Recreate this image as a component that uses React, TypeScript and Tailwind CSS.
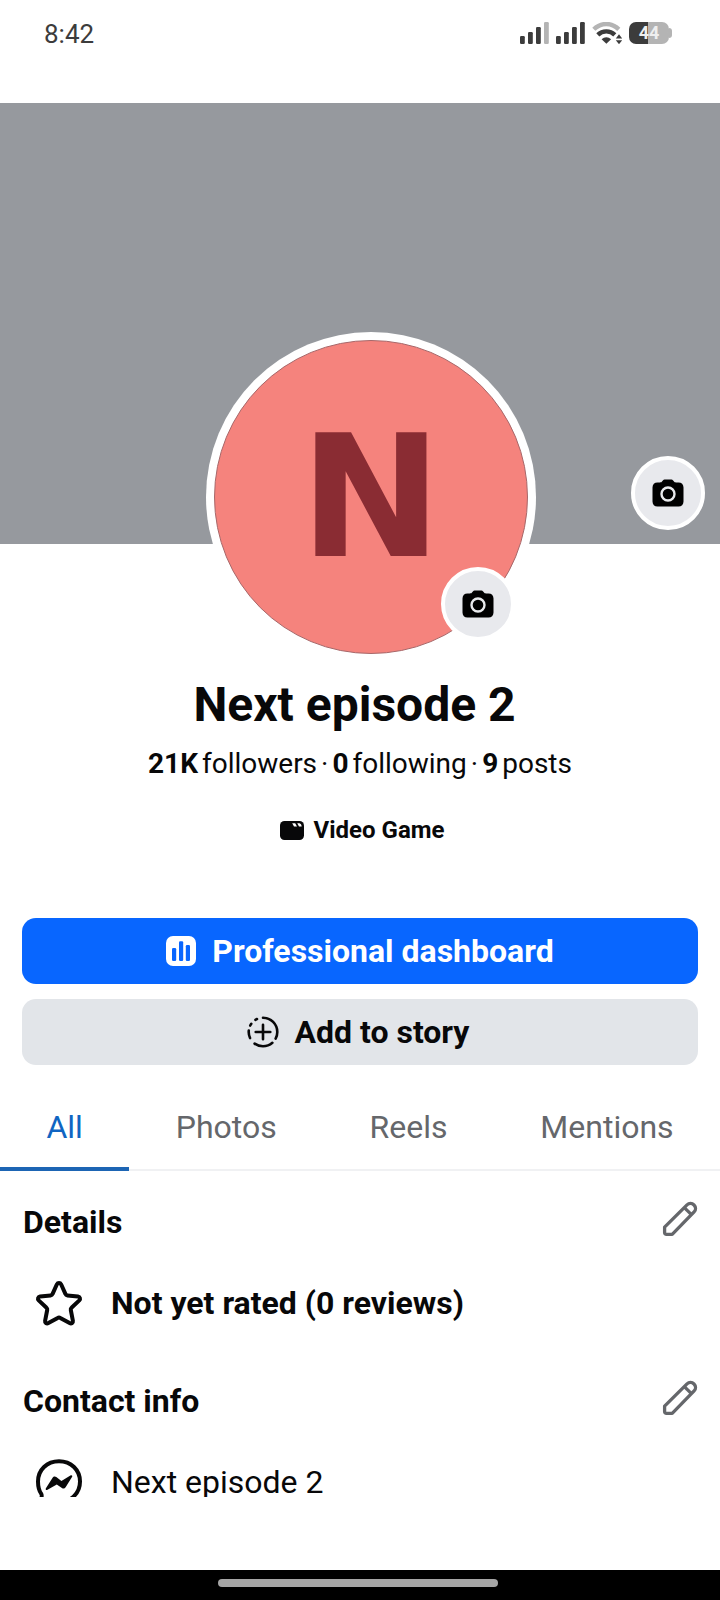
import React from "react";

function SignalIcon({ weak = false }: { weak?: boolean }) {
  return (
    <svg width="29" height="22" viewBox="0 0 29 22" fill="#3c3c3c" aria-hidden="true">
      <rect x="0" y="14" width="4.8" height="8" rx="1.2" />
      <rect x="8" y="10" width="4.8" height="12" rx="1.2" />
      <rect x="16" y="5" width="4.8" height="17" rx="1.2" />
      <rect x="24" y="0" width="4.8" height="22" rx="1.2" fill={weak ? "#b4b4b4" : "#3c3c3c"} />
    </svg>
  );
}

function WifiIcon() {
  return (
    <svg width="30" height="22" viewBox="0 0 30 22" fill="none" aria-hidden="true">
      <path d="M1.8 7.3C9 .2 19.500 .2 26.800 7.300" stroke="#b4b4b4" strokeWidth="4.400" />
      <path d="M5.800 12.900C10.600 8.200 18 8.200 22.800 12.900" stroke="#3c3c3c" strokeWidth="4.400" />
      <path d="M9.600 17.200C12.400 14.500 16.300 14.500 19.100 17.200L14.350 21.800Z" fill="#3c3c3c" />
      <path d="M27 12.300L30.200 16.600H23.800ZM27 22.200L23.800 18.200H30.200Z" fill="#3c3c3c" />
    </svg>
  );
}

function CameraIcon() {
  return (
    <svg width="32" height="28" viewBox="0 0 32 28" aria-hidden="true">
      <path
        d="M10.200 2.300C11 .9 12.200 .5 13.500 .5H18.500C19.800 .5 21 .9 21.800 2.300C22.300 3.200 23 3.400 24 3.400H26.500C29.600 3.400 31.500 5.300 31.500 8.400V22.500C31.500 25.600 29.600 27.500 26.500 27.500H5.500C2.400 27.500 .5 25.600 .5 22.500V8.400C.5 5.300 2.400 3.400 5.500 3.400H8C9 3.400 9.700 3.200 10.200 2.300Z"
        fill="#000"
      />
      <circle cx="16" cy="15" r="6.500" fill="none" stroke="#e8e9ec" strokeWidth="2.400" />
    </svg>
  );
}

function CameraButton({ label, className }: { label: string; className: string }) {
  return (
    <button
      type="button"
      aria-label={label}
      className={`absolute flex size-[74px] items-center justify-center rounded-full border-4 border-white bg-[#e8e9ed] ${className}`}
    >
      <CameraIcon />
    </button>
  );
}

function ClapperIcon() {
  return (
    <svg width="24" height="19" viewBox="0 0 24 19" aria-hidden="true">
      <rect width="24" height="19" rx="4.500" fill="#080809" />
      <path d="M12.200 2.300H15.200L17 5.500H14ZM17.200 2.300H19.500C20.700 2.800 21.500 3.700 21.700 5.500H19Z" fill="#fff" />
    </svg>
  );
}

function DashboardIcon() {
  return (
    <svg width="30" height="30" viewBox="0 0 30 30" aria-hidden="true">
      <rect width="30" height="30" rx="7" fill="#fff" />
      <g fill="#0866ff">
        <rect x="6" y="12" width="4.200" height="13" rx="1.200" />
        <rect x="13" y="5.200" width="4.200" height="19.800" rx="1.200" />
        <rect x="19.800" y="9" width="4.200" height="16" rx="1.200" />
      </g>
    </svg>
  );
}

function StoryIcon() {
  return (
    <svg width="32" height="32" viewBox="0 0 32 32" fill="none" stroke="#080809" strokeWidth="2.600" strokeLinecap="round" aria-hidden="true">
      <path d="M16 8.700V23.300M8.700 16H23.300" />
      <circle
        cx="16"
        cy="16"
        r="14.300"
        pathLength="360"
        strokeDasharray="118 21 77 29 31 21 8 23 7 25"
        transform="rotate(-90 16 16)"
      />
    </svg>
  );
}

function PencilIcon() {
  return (
    <svg width="36" height="36" viewBox="0 0 36 36" fill="none" stroke="#65676b" strokeWidth="3.300" strokeLinejoin="round" aria-hidden="true">
      <path d="M2.600 26.200L25 3.900C27 2 30 2 32 4C34 6 34 8.900 32.100 10.900L10.200 33.400H4.600C3.200 33.400 2.600 32.800 2.600 31.400Z" />
      <path d="M22.300 6.600L29.500 13.700" />
    </svg>
  );
}

function StarIcon() {
  return (
    <svg width="48" height="48" viewBox="0 0 48 48" fill="none" stroke="#080809" strokeWidth="4" strokeLinejoin="round" aria-hidden="true">
      <path d="M21.900 5.300C22.800 3.500 25.200 3.500 26.100 5.300L30.400 14.900C30.800 15.800 31.500 16.300 32.400 16.400L43 17.600C45 17.900 45.700 20 44.300 21.400L36.500 28.700C35.800 29.300 35.600 30.100 35.800 31L37.900 41.800C38.200 43.800 36.400 45.100 34.600 44.100L25.300 38.900C24.500 38.400 23.500 38.400 22.700 38.900L13.400 44.100C11.600 45.100 9.800 43.800 10.100 41.800L12.200 31C12.400 30.100 12.200 29.300 11.500 28.700L3.700 21.400C2.300 20 3 17.900 5 17.600L15.600 16.400C16.500 16.300 17.200 15.800 17.600 14.900Z" />
    </svg>
  );
}

function MessengerIcon() {
  return (
    <svg width="48" height="48" viewBox="0 0 48 48" aria-hidden="true">
      <path
        d="M24 3.200C12 3.200 3 11.800 3 23.500C3 29.300 4.500 33.500 6.400 36.200C7.100 37.200 6.600 39 6.200 41.500C5.900 44.500 7.500 45.300 9.800 44.400L14.500 42.800C17.500 43.700 20.500 44 24 44C36 44 45 35.200 45 23.500C45 11.800 36 3.200 24 3.200Z"
        fill="none"
        stroke="#080809"
        strokeWidth="4"
      />
      <path
        d="M10.900 30.200L17.600 19.700C18.400 18.300 20.100 18.100 21.300 19L26.400 22.900L35.400 17.400C36.900 16.600 37.800 17.700 37 19L30.600 29.300C29.700 30.700 28.200 30.900 26.900 29.900L21.800 26.400L12.500 31.800C11.200 32.500 10.200 31.500 10.900 30.200Z"
        fill="#080809"
      />
    </svg>
  );
}

function StatusBar() {
  return (
    <header className="flex h-[103px] shrink-0 items-start justify-between pl-11 pr-12 pt-[18px]">
      <time className="text-[26px] leading-8 text-[#3c3c3c]">8:42</time>
      <div className="flex items-center gap-[7px] pt-1">
        <SignalIcon weak />
        <SignalIcon />
        <WifiIcon />
        <div className="flex items-center">
          <div className="flex h-[22px] w-10 items-center justify-center rounded-[7px] bg-linear-to-r from-[#3c3c3c] from-47% to-[#b4b4b4] to-47% text-[18px] leading-5 font-bold text-[#efefef]">
            44
          </div>
          <div className="h-2.5 w-[3px] rounded-r-sm bg-[#b4b4b4]" />
        </div>
      </div>
    </header>
  );
}

const tabs = ["All", "Photos", "Reels", "Mentions"];

function Section({ title, icon, children }: { title: string; icon: React.ReactNode; children: React.ReactNode }) {
  return (
    <section>
      <div className="flex items-start justify-between pr-[22px] pl-[23px]">
        <h2 className="text-[32px] leading-[42px] font-bold">{title}</h2>
        <button type="button" aria-label={`Edit ${title}`}>
          <PencilIcon />
        </button>
      </div>
      <div className="mt-9 flex items-center gap-7 pl-[35px] text-[32px] leading-12">
        {icon}
        {children}
      </div>
    </section>
  );
}

export default function App() {
  return (
    <div className="flex h-screen flex-col bg-white font-[Roboto,'Noto_Sans',sans-serif] text-[#080809]">
      <StatusBar />

      <main className="min-h-0 flex-1 overflow-y-auto [scrollbar-width:none]">
        <div className="relative h-[441px] bg-[#96999e]">
          <CameraButton label="Change cover photo" className="right-[15px] bottom-[14px]" />
        </div>

        <div className="-mt-[212px] flex justify-center pl-[22px]">
          <div className="relative size-[330px] rounded-full bg-white p-2">
            <div className="flex size-full items-center justify-center rounded-full border border-[#a7686a] bg-[#f5837d] font-['DejaVu_Sans',sans-serif] text-[170px] leading-none font-bold text-[#8a2c33]">
              N
            </div>
            <CameraButton label="Change profile picture" className="right-[21px] bottom-[21px]" />
          </div>
        </div>

        <h1 className="mt-[15px] pr-[11px] text-center text-[48px] leading-14 font-bold">Next episode 2</h1>

        <p className="mt-[15px] flex justify-center gap-1 text-[28px] leading-8">
          <span className="flex gap-1">
            <b>21K</b> followers
          </span>
          <span>·</span>
          <span className="flex gap-1">
            <b>0</b> following
          </span>
          <span>·</span>
          <span className="flex gap-1">
            <b>9</b> posts
          </span>
        </p>

        <p className="mt-9 flex items-center justify-center gap-[10px] pl-1 text-2xl leading-7 font-bold">
          <ClapperIcon />
          Video Game
        </p>

        <div className="mt-[74px] flex flex-col gap-[15px] px-[22px] text-[32px] font-bold">
          <button type="button" className="flex h-[66px] items-center justify-center gap-4 rounded-[14px] bg-[#0866ff] text-white">
            <DashboardIcon />
            Professional dashboard
          </button>
          <button type="button" className="flex h-[66px] items-center justify-center gap-4 rounded-[14px] bg-[#e2e5e9] pr-1">
            <StoryIcon />
            Add to story
          </button>
        </div>

        <nav className="mt-[18px] flex border-b-2 border-[#f0f1f3] text-[32px] text-[#65676b]">
          {tabs.map((tab, i) => (
            <a
              key={tab}
              href="#"
              aria-current={i === 0 ? "page" : undefined}
              className={
                i === 0
                  ? "-mb-0.5 flex h-[88px] flex-auto items-center justify-center border-b-4 border-[#1d65b4] pt-1 text-[#1065c2]"
                  : "-mb-0.5 flex h-[88px] flex-auto items-center justify-center"
              }
            >
              {tab}
            </a>
          ))}
        </nav>

        <div className="flex flex-col gap-[53px] pt-[30px]">
          <Section title="Details" icon={<StarIcon />}>
            <p className="font-bold">Not yet rated (0 reviews)</p>
          </Section>
          <Section title="Contact info" icon={<MessengerIcon />}>
            <p>Next episode 2</p>
          </Section>
        </div>
      </main>

      <footer className="shrink-0 pt-[73px]">
        <div className="flex h-[30px] justify-center bg-black pt-[9px] pr-1">
          <div className="h-2 w-[39%] rounded-full bg-[#a5a5a5]" />
        </div>
      </footer>
    </div>
  );
}
